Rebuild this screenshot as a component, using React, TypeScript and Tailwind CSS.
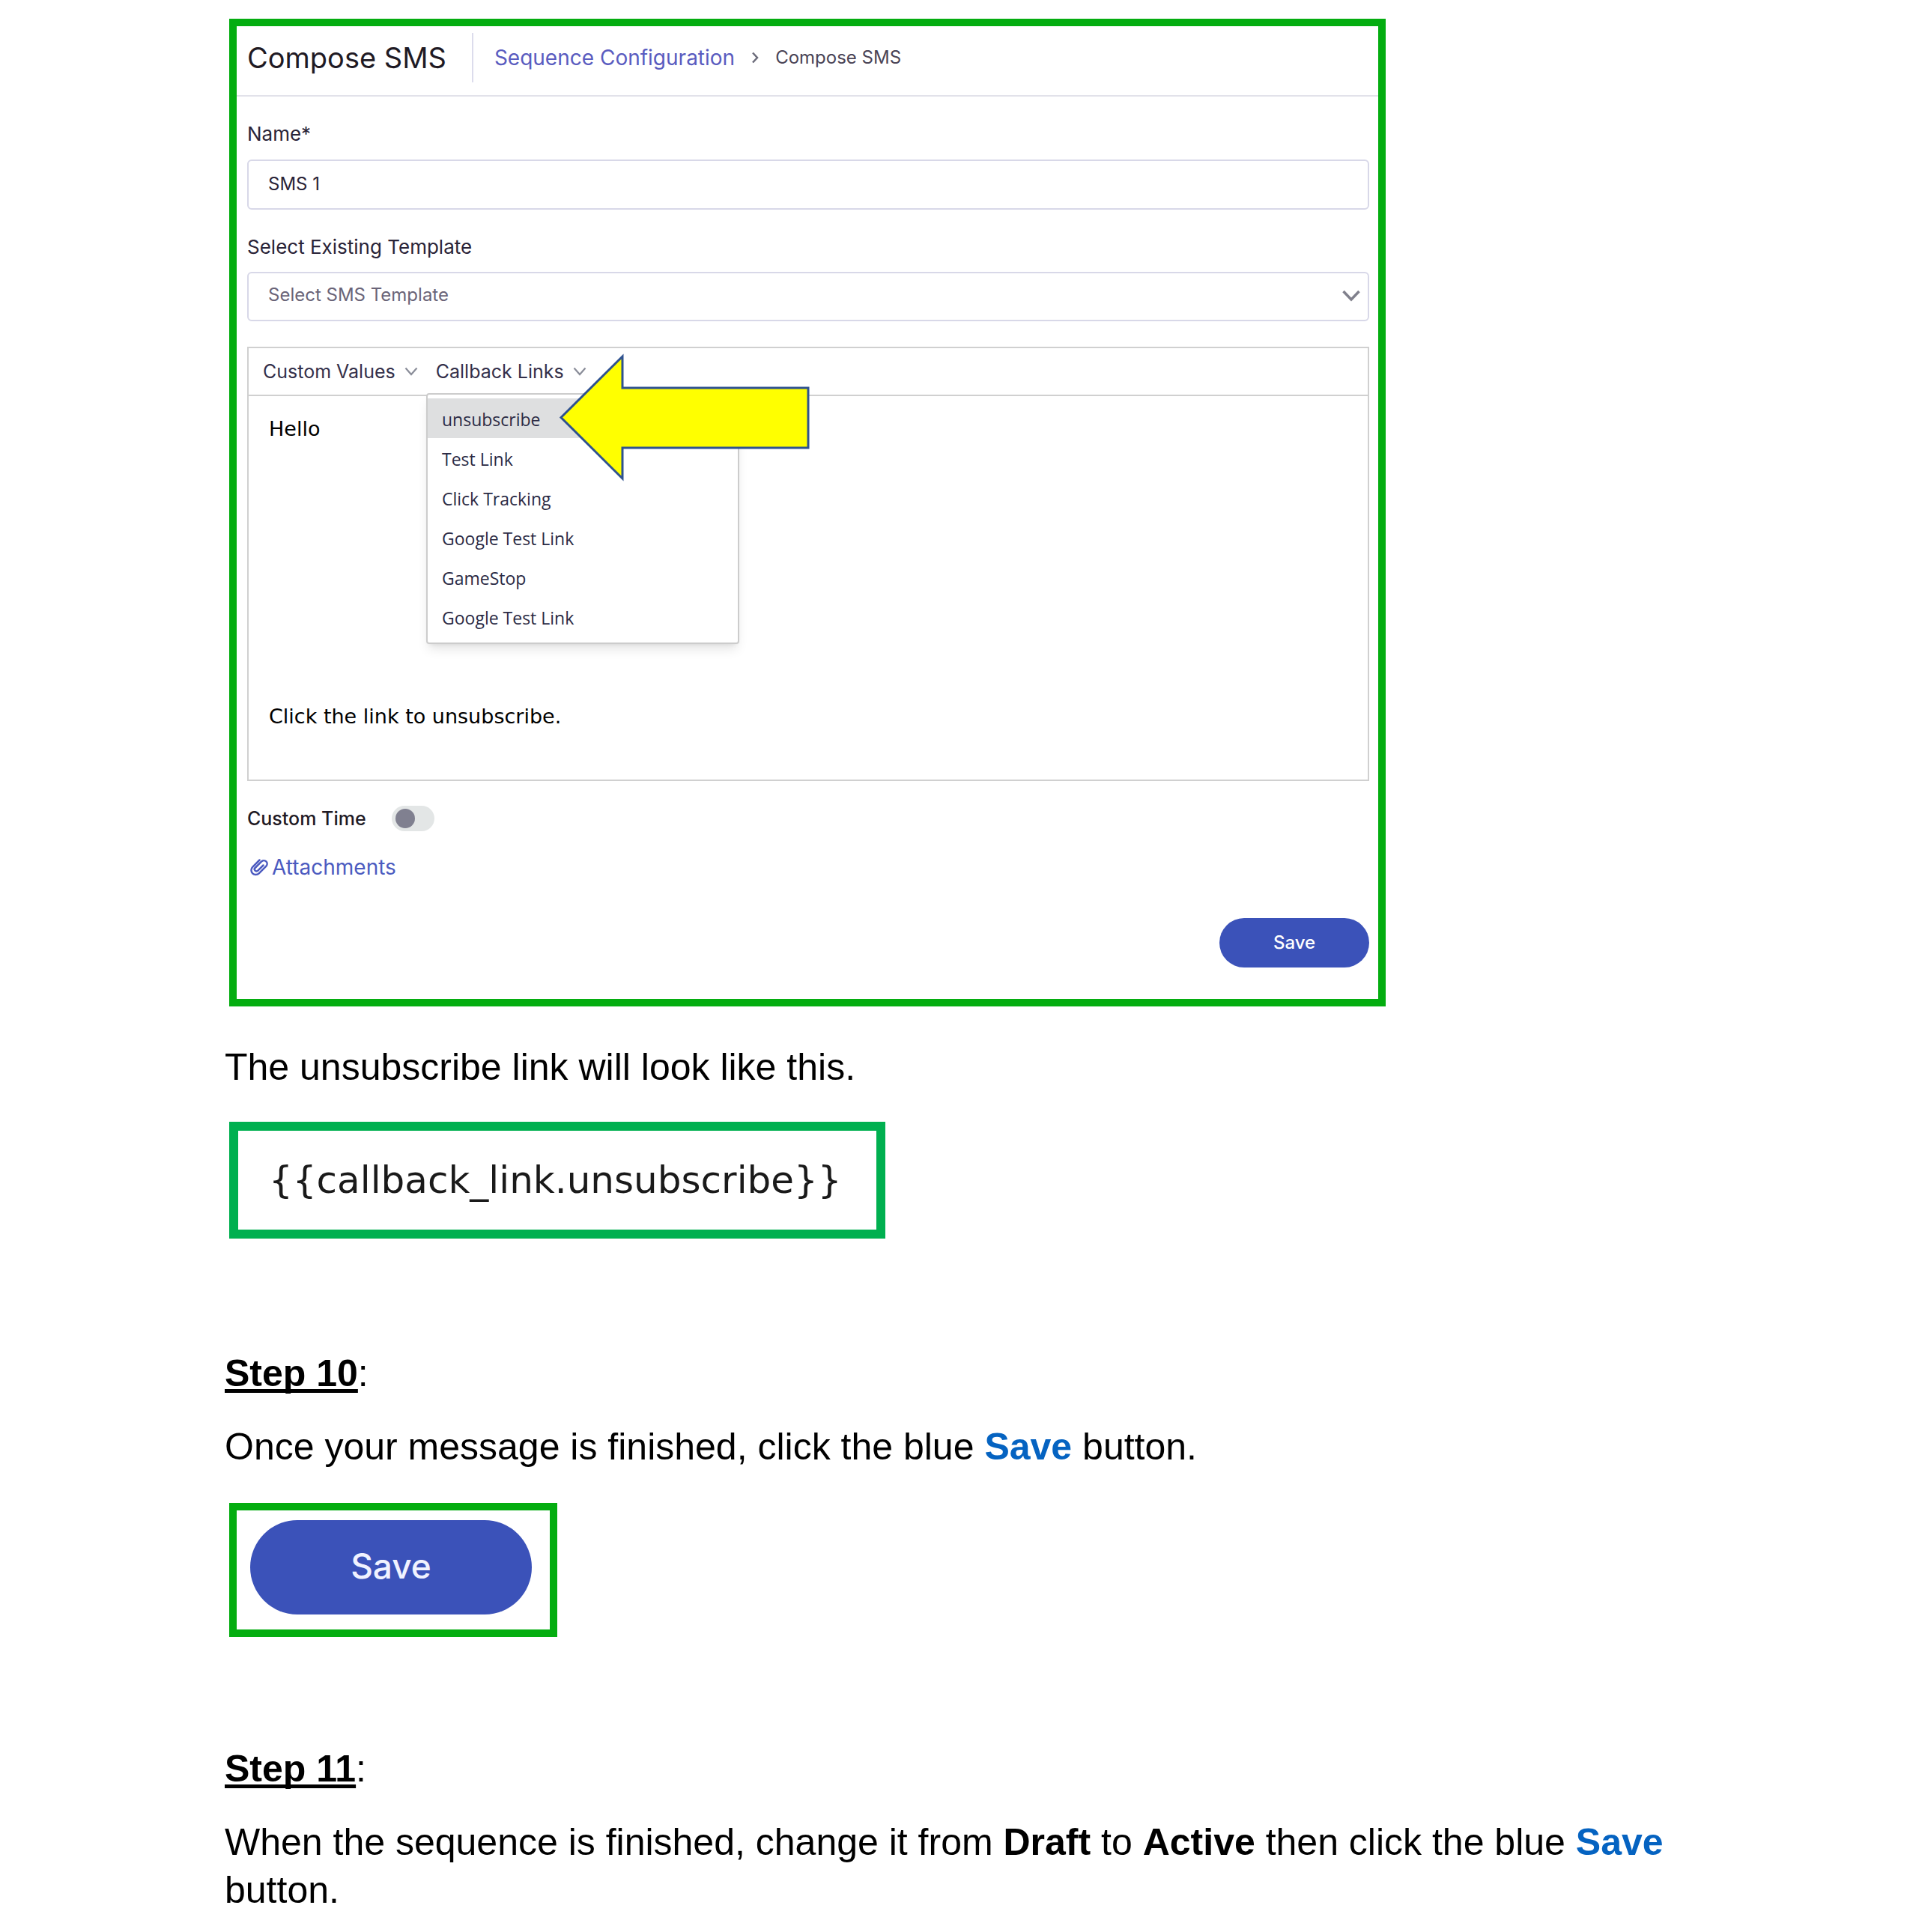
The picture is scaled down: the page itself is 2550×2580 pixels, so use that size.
import { useState } from "react";

type Callback = { id: number; label: string };

const CALLBACK_LINKS: Callback[] = [
  { id: 1, label: "unsubscribe" },
  { id: 2, label: "Test Link" },
  { id: 3, label: "Click Tracking" },
  { id: 4, label: "Google Test Link" },
  { id: 5, label: "GameStop" },
  { id: 6, label: "Google Test Link" },
];

const DEFAULT_MESSAGE = "Hello" + "\n".repeat(12) + "Click the link to unsubscribe.";

function Chevron() {
  return (
    <svg
      viewBox="0 0 18 12"
      fill="none"
      stroke="#8a8d99"
      aria-hidden="true"
      className="h-3 w-[18px]"
    >
      <path d="M1.5 1.5 9 10 16.5 1.5" strokeWidth="2.2" />
    </svg>
  );
}

function PaperClip() {
  return (
    <svg
      viewBox="0 0 26 24"
      fill="none"
      stroke="currentColor"
      aria-hidden="true"
      className="h-6 w-[26px]"
    >
      <path
        d="M13.5 2.5 4.2 11.8a6 6 0 0 0 8.5 8.5L22.6 10.4a4.4 4.4 0 0 0-6.2-6.2L7.6 13a2.6 2.6 0 0 0 3.7 3.7l7.2-7.2"
        strokeWidth="2.5"
        strokeLinecap="round"
      />
    </svg>
  );
}

// Pointer drawn over the editor, aimed at the unsubscribe entry
function PointerArrow() {
  return (
    <svg
      viewBox="0 0 340 176"
      aria-hidden="true"
      className="pointer-events-none absolute left-[412px] top-[6px] h-[176px] w-[340px]"
    >
      <path
        d="M5 86.5 87 5V47H335V127H87V168Z"
        fill="#ffff00"
        stroke="#2f528f"
        strokeWidth="3"
      />
    </svg>
  );
}

function MessageEditor() {
  const [message, setMessage] = useState(DEFAULT_MESSAGE);
  const [menuOpen, setMenuOpen] = useState(true);
  const [activeId, setActiveId] = useState(1);

  function insertLink(label: string) {
    setMessage((prev) => `${prev}\n{{callback_link.${label}}}`);
    setMenuOpen(false);
  }

  return (
    <div className="relative mt-[34px] border-2 border-[#d0d0d0]">
      <div className="flex h-16 items-center gap-6 border-b-2 border-[#d0d0d0] px-[19px] text-[25px] text-[#34304a]">
        <button type="button" className="flex items-center gap-3">
          Custom Values
          <Chevron />
        </button>
        <button
          type="button"
          aria-expanded={menuOpen}
          onClick={() => setMenuOpen(!menuOpen)}
          className="flex items-center gap-3"
        >
          Callback Links
          <Chevron />
        </button>
      </div>

      <textarea
        aria-label="Message"
        value={message}
        onChange={(e) => setMessage(e.target.value)}
        className="block h-[512px] w-full resize-none px-[27px] py-7 font-['DejaVu_Sans',sans-serif] text-[27px] leading-8 text-black outline-none"
      />

      {menuOpen && (
        <ul className="absolute left-[237px] top-[60px] w-[418px] rounded-sm border-2 border-[#cccccc] bg-white pb-2 pt-[5px] font-['Open_Sans',sans-serif] text-[23px] text-[#2b2b45] shadow-lg">
          {CALLBACK_LINKS.map((link) => (
            <li key={link.id}>
              <button
                type="button"
                onMouseEnter={() => setActiveId(link.id)}
                onClick={() => insertLink(link.label)}
                className={`block h-[53px] w-full px-[19px] pt-[3px] text-left ${
                  link.id === activeId ? "bg-[#dedfe0]" : "bg-white"
                }`}
              >
                {link.label}
              </button>
            </li>
          ))}
        </ul>
      )}

      <PointerArrow />
    </div>
  );
}

function ComposeSms() {
  const [name, setName] = useState("SMS 1");
  const [customTime, setCustomTime] = useState(false);

  return (
    <section className="ml-[6px] w-full max-w-[1544px] border-[10px] border-[#04ad10] bg-white font-[Inter,sans-serif] text-[24px] leading-8 text-[#2a2438]">
      <header className="flex h-[94px] items-center border-b-2 border-[#e2e2ea] px-[14px] pb-2">
        <h1 className="border-r-2 border-[#dcdcec] py-[17px] pr-[34px] text-[38px] text-[#1f1a24]">
          Compose SMS
        </h1>
        <nav aria-label="Breadcrumb" className="ml-7 flex items-center">
          <a href="#sequence" className="text-[28px] text-[#5a5cc0]">
            Sequence Configuration
          </a>
          <svg
            viewBox="0 0 10 16"
            fill="none"
            stroke="#6b6b7a"
            aria-hidden="true"
            className="mx-[22px] h-4 w-[10px]"
          >
            <path d="M2 1.5 8 8 2 14.5" strokeWidth="2.5" />
          </svg>
          <span className="text-[#4a4456]">Compose SMS</span>
        </nav>
      </header>

      <form
        className="pb-[42px] pl-[14px] pr-3 pt-[34px]"
        onSubmit={(e) => e.preventDefault()}
      >
        <label htmlFor="sms-name" className="block text-[26px]">
          Name*
        </label>
        <input
          id="sms-name"
          type="text"
          value={name}
          onChange={(e) => setName(e.target.value)}
          className="mt-[18px] block h-[67px] w-full rounded-md border-2 border-[#d8d8e8] px-[26px] pb-[2px] outline-none"
        />

        <label htmlFor="sms-template" className="mt-[34px] block text-[26px]">
          Select Existing Template
        </label>
        <div className="relative mt-[17px]">
          <select
            id="sms-template"
            className="block h-[66px] w-full appearance-none rounded-md border-2 border-[#d8d8e8] px-[26px] pb-1 text-[#6a6478] outline-none"
          >
            <option>Select SMS Template</option>
          </select>
          <svg
            viewBox="0 0 24 16"
            fill="none"
            stroke="#80808c"
            aria-hidden="true"
            className="pointer-events-none absolute right-3 top-6 h-4 w-6"
          >
            <path d="M1.5 2 12 13 22.5 2" strokeWidth="3.5" />
          </svg>
        </div>

        <MessageEditor />

        <div className="mt-[33px] flex items-center gap-[34px]">
          <label htmlFor="custom-time" className="text-[25px] font-medium text-[#1f1a24]">
            Custom Time
          </label>
          <input
            id="custom-time"
            type="checkbox"
            role="switch"
            checked={customTime}
            onChange={(e) => setCustomTime(e.target.checked)}
            className="flex h-[34px] w-[57px] appearance-none items-center rounded-full bg-[#e3e6e6] px-[5px] before:size-[26px] before:rounded-full before:bg-[#808090] checked:justify-end"
          />
        </div>

        <a
          href="#attachments"
          className="mt-8 flex w-fit items-center gap-1 pl-[3px] text-[28px] text-[#4c5bc0]"
        >
          <PaperClip />
          Attachments
        </a>

        <div className="mt-[52px] flex justify-end">
          <button
            type="submit"
            className="h-[66px] w-[200px] rounded-full bg-[#3b52b9] font-medium text-white"
          >
            Save
          </button>
        </div>
      </form>
    </section>
  );
}

function StepHeading({ children }: { children: string }) {
  return (
    <h2>
      <span className="font-bold underline decoration-[5px] underline-offset-4 [text-decoration-skip-ink:none]">
        {children}
      </span>
      :
    </h2>
  );
}

function App() {
  return (
    <main className="bg-white px-[300px] pb-6 pt-[25px] font-['Liberation_Sans',Arial,sans-serif] text-[50px] leading-[64px] text-black">
      <ComposeSms />

      <p className="mt-[49px]">The unsubscribe link will look like this.</p>
      <div className="ml-[6px] mt-[41px] w-fit border-[12px] border-[#00b050] py-[34px] pl-[41px] pr-[46px] font-['DejaVu_Sans',sans-serif] text-[#1a1a1a]">
        {"{{callback_link.unsubscribe}}"}
      </div>

      <div className="mt-[148px]">
        <StepHeading>Step 10</StepHeading>
      </div>
      <p className="mt-[34px]">
        Once your message is finished, click the blue{" "}
        <strong className="text-[#0563c1]">Save</strong> button.
      </p>
      <div className="ml-[6px] mt-[43px] w-fit border-[10px] border-[#04ad10] pb-5 pl-[18px] pr-6 pt-[13px]">
        <button
          type="button"
          className="block h-[126px] w-[376px] rounded-full bg-[#3b52b9] pb-1 font-[Inter,sans-serif] text-[46px] font-medium text-[#f0f2ff]"
        >
          Save
        </button>
      </div>

      <div className="mt-36">
        <StepHeading>Step 11</StepHeading>
      </div>
      <p className="mt-[34px]">
        When the sequence is finished, change it from <strong>Draft</strong> to{" "}
        <strong>Active</strong> then click the blue{" "}
        <strong className="text-[#0563c1]">Save</strong> button.
      </p>
    </main>
  );
}

export default App;
